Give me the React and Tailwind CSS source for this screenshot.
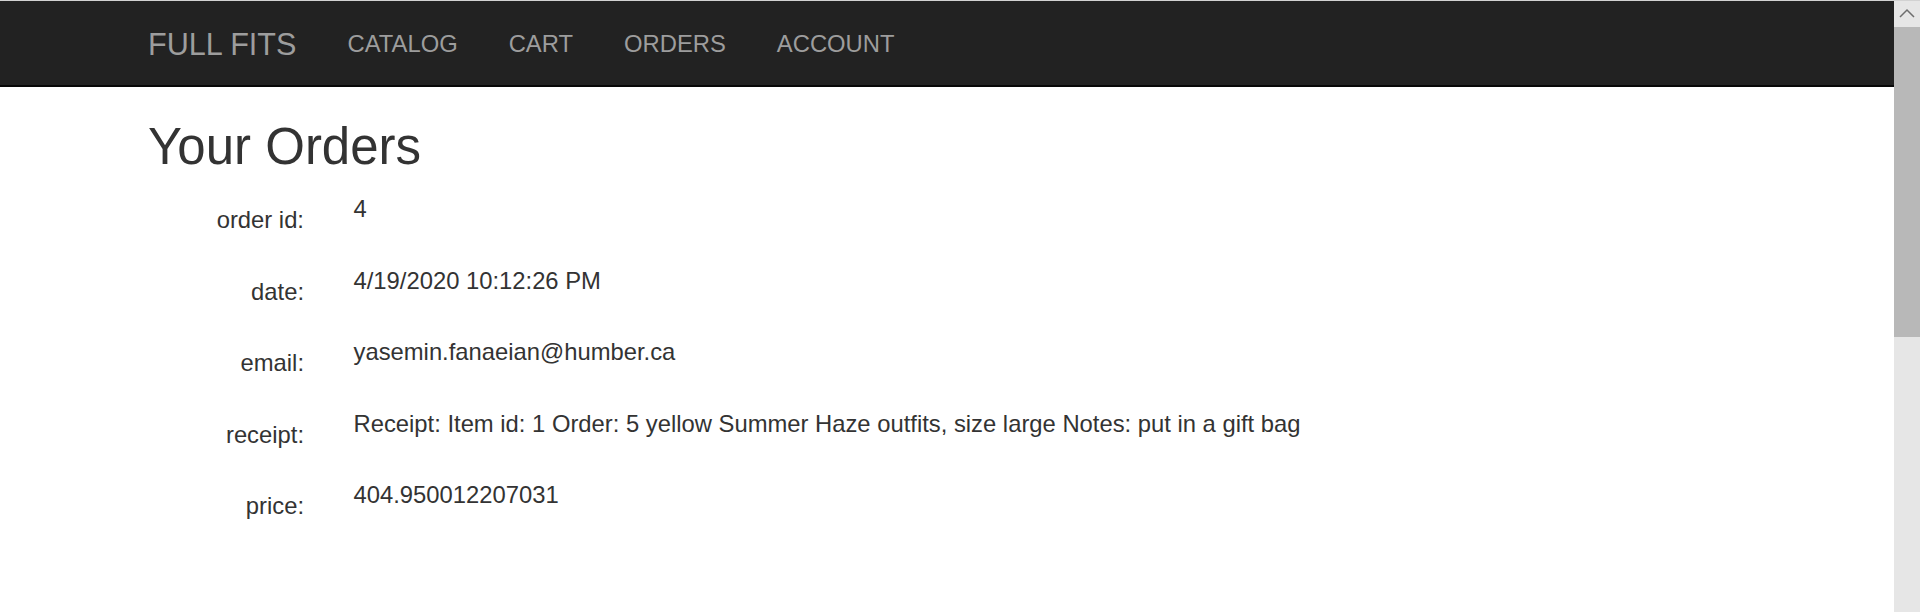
import React from "react";

const links = ["CATALOG", "CART", "ORDERS", "ACCOUNT"];

const order = [
  { label: "order id:", value: "4" },
  { label: "date:", value: "4/19/2020 10:12:26 PM" },
  { label: "email:", value: "yasemin.fanaeian@humber.ca" },
  {
    label: "receipt:",
    value:
      "Receipt: Item id: 1 Order: 5 yellow Summer Haze outfits, size large Notes: put in a gift bag",
  },
  { label: "price:", value: "404.950012207031" },
];

export default function App() {
  return (
    <div className="flex h-[612px] flex-col overflow-hidden bg-white font-['Liberation_Sans',Arial,sans-serif] text-[#333]">
      <div className="h-px shrink-0 bg-[#d2d2d2]" />
      <div className="flex min-h-0 flex-1">
        {/* PAGE */}
        <div className="flex min-w-0 flex-1 flex-col">
          {/* NAVBAR */}
          <nav className="flex h-[86px] shrink-0 items-center gap-[51px] border-b-2 border-[#080808] bg-[#222] pt-[2px] pl-[148px]">
            <a className="text-[30.6px] leading-[34px] text-[#9d9d9d]">FULL FITS</a>
            {links.map((l) => (
              <a key={l} className="text-[23.8px] leading-[34px] text-[#9d9d9d]">
                {l}
              </a>
            ))}
          </nav>

          {/* CONTENT */}
          <div className="pl-[148px]">
            <h2 className="mt-[32px] text-[51px] font-normal leading-[56px]">
              Your Orders
            </h2>

            <div className="mt-[17px]">
              {order.map((row) => (
                <div key={row.label} className="flex h-[71.5px] text-[23.8px] leading-[34px]">
                  <div className="w-[156px] shrink-0 pt-[11px] text-right">{row.label}</div>
                  <div className="ml-[49.5px]">{row.value}</div>
                </div>
              ))}
            </div>
          </div>
        </div>

        {/* SCROLLBAR */}
        <div className="flex w-[26px] shrink-0 flex-col bg-[#e6e6e6]">
          <div className="flex h-[26px] items-center justify-center">
            <svg width="26" height="26" viewBox="0 0 26 26" fill="none">
              <path d="M6 16 L13 9 L20 16" stroke="#6e6e6e" strokeWidth="1.5" />
            </svg>
          </div>
          <div className="h-[310px] bg-[#b8b8b8]" />
        </div>
      </div>
    </div>
  );
}
